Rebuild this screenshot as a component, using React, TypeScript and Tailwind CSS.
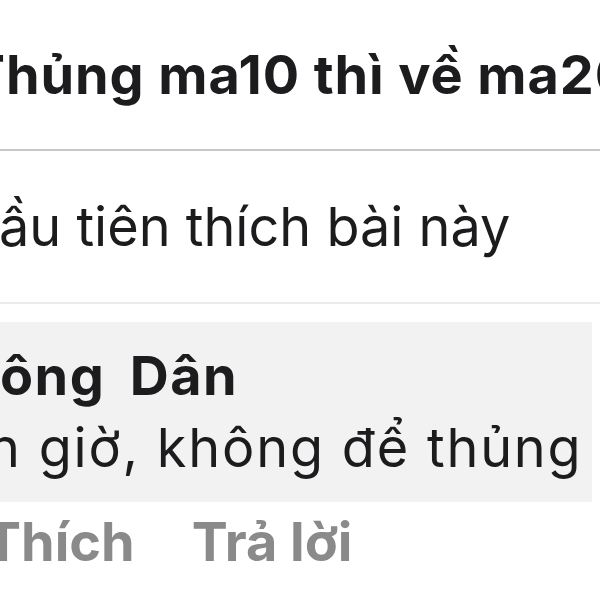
import React from "react";

export default function App() {
  return (
    <div className="w-[600px] h-[600px] bg-white overflow-hidden font-['Inter','Noto_Sans',sans-serif] text-[#1c1c1e]">
      <div className="h-[149px] flex items-center overflow-hidden whitespace-nowrap">
        <span className="ml-[-31px] text-[54px] font-bold leading-none tracking-[0.9px]">Thủng ma10 thì về ma20</span>
      </div>
      <div className="h-[2px] bg-[#c8c8c8]" />
      <div className="h-[151px] flex items-center overflow-hidden whitespace-nowrap">
        <span className="ml-[-1px] text-[54px] font-normal leading-none">ầu tiên thích bài này</span>
      </div>
      <div className="h-[2px] bg-[#ebebeb]" />
      <div className="h-[18px]" />
      <div className="w-[592px] h-[180px] bg-[#f2f2f2] flex flex-col justify-center overflow-hidden whitespace-nowrap">
        <div className="text-[54px] font-bold leading-[72px] tracking-[1.5px] [word-spacing:10px]">ông Dân</div>
        <div className="ml-[-12px] text-[54px] font-normal leading-[72px] tracking-[1.8px]">n giờ, không để thủng</div>
      </div>
      <div className="h-[80px] flex items-center gap-[57px] whitespace-nowrap text-[54px] font-bold text-[#8a8a8a] leading-none">
        <span className="ml-[-15px]">Thích</span>
        <span>Trả lời</span>
      </div>
    </div>
  );
}
